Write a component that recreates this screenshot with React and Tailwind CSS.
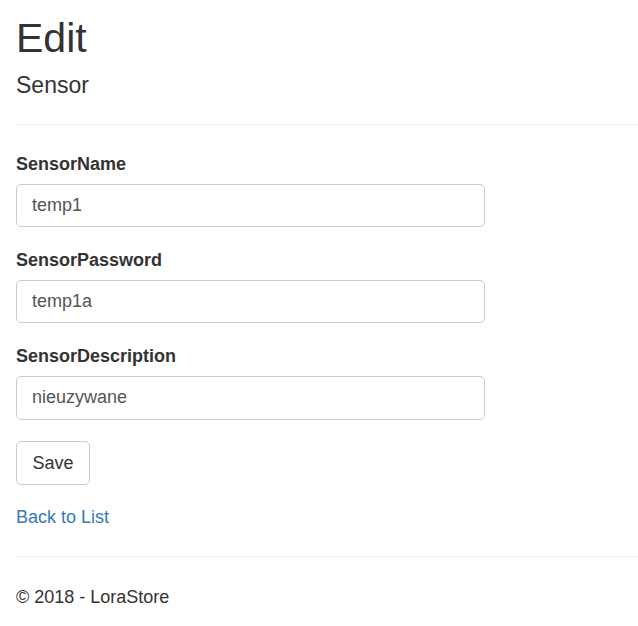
export default function App() {
  const fields = [
    { label: "SensorName", value: "temp1" },
    { label: "SensorPassword", value: "temp1a" },
    { label: "SensorDescription", value: "nieuzywane" },
  ];
  return (
    <div
      className="min-h-[626px] bg-white pl-4 pt-4 text-[18px] text-[#333]"
      style={{ fontFamily: '"Liberation Sans", Arial, Helvetica, sans-serif' }}
    >
      <h1 className="m-0 text-[41px] font-normal leading-[45px]">Edit</h1>
      <h4 className="mt-[11px] text-[23px] font-normal leading-[26px]">Sensor</h4>
      <hr className="mt-[26px] border-t border-[#eee]" />
      <form className="mt-[26px]" onSubmit={(e) => e.preventDefault()}>
        {fields.map((f, i) => (
          <div key={f.label} className={i === 2 ? "mb-[21px]" : "mb-[20px]"}>
            <label className="block text-[18px] font-bold leading-[26px]">{f.label}</label>
            <input
              className="mt-[6.5px] block h-[43.7px] w-[469px] rounded-[5px] border border-[#ccc] bg-white px-[15px] text-[18px] text-[#555] outline-none"
              defaultValue={f.value}
            />
          </div>
        ))}
        <button
          type="submit"
          className="block h-[44px] w-[74px] rounded-[5px] border border-[#ccc] bg-white text-[18px] leading-[26px] text-[#333]"
        >
          Save
        </button>
      </form>
      <div className="mt-[19px] leading-[26px]">
        <a href="#" className="text-[#337ab7] no-underline">
          Back to List
        </a>
      </div>
      <hr className="mt-[26px] border-t border-[#eee]" />
      <footer className="mt-[27.7px] leading-[26px]">
        <p className="m-0">© 2018 - LoraStore</p>
      </footer>
    </div>
  );
}
